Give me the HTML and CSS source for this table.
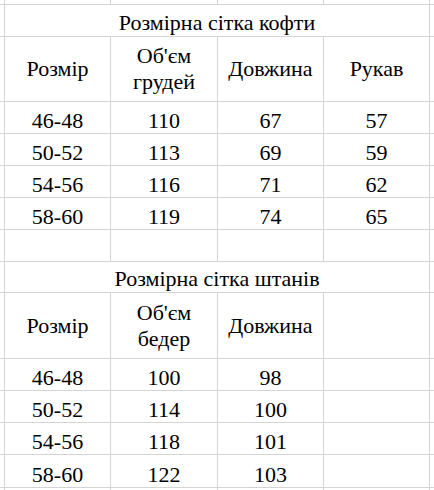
FILE: index.html
```html
<!DOCTYPE html>
<html>
<head>
<meta charset="utf-8">
<title>Розмірна сітка</title>
<link rel="stylesheet" href="styles.css">
</head>
<body>
<div class="sheet">
  <div class="c"></div><div class="c"></div><div class="c"></div><div class="c"></div><div class="c"></div><div class="c"></div>

  <div class="c"></div><div class="c title span4">Розмірна сітка кофти</div><div class="c"></div>

  <div class="c"></div><div class="c hd">Розмір</div><div class="c hd">Об'єм<br>грудей</div><div class="c hd">Довжина</div><div class="c hd">Рукав</div><div class="c"></div>

  <div class="c"></div><div class="c">46-48</div><div class="c">110</div><div class="c">67</div><div class="c">57</div><div class="c"></div>
  <div class="c"></div><div class="c">50-52</div><div class="c">113</div><div class="c">69</div><div class="c">59</div><div class="c"></div>
  <div class="c"></div><div class="c">54-56</div><div class="c">116</div><div class="c">71</div><div class="c">62</div><div class="c"></div>
  <div class="c"></div><div class="c">58-60</div><div class="c">119</div><div class="c">74</div><div class="c">65</div><div class="c"></div>

  <div class="c"></div><div class="c"></div><div class="c"></div><div class="c"></div><div class="c"></div><div class="c"></div>

  <div class="c"></div><div class="c title span4">Розмірна сітка штанів</div><div class="c"></div>

  <div class="c"></div><div class="c hd">Розмір</div><div class="c hd">Об'єм<br>бедер</div><div class="c hd">Довжина</div><div class="c"></div><div class="c"></div>

  <div class="c"></div><div class="c">46-48</div><div class="c">100</div><div class="c">98</div><div class="c"></div><div class="c"></div>
  <div class="c"></div><div class="c">50-52</div><div class="c">114</div><div class="c">100</div><div class="c"></div><div class="c"></div>
  <div class="c"></div><div class="c">54-56</div><div class="c">118</div><div class="c">101</div><div class="c"></div><div class="c"></div>
  <div class="c"></div><div class="c">58-60</div><div class="c">122</div><div class="c">103</div><div class="c"></div><div class="c"></div>

  <div class="c"></div><div class="c"></div><div class="c"></div><div class="c"></div><div class="c"></div><div class="c"></div>
</div>
</body>
</html>
```
FILE: styles.css
```css
html, body {
  margin: 0;
  padding: 0;
  background: #ffffff;
  font-family: Tinos, "Liberation Serif", serif;
  font-size: 22px;
  font-weight: 400;
}

.sheet {
  display: grid;
  grid-template-columns: 4px 105px 106px 105px 105px 4px;
  grid-template-rows: 4px 31px 64px 31px 31px 31px 31px 31px 30px 65px 31px 31px 31px 32px 2px;
  gap: 1px;
  width: 434px;
  height: 490px;
  overflow: hidden;
  background: #d4d4d4;
  color: #000000;
}

.c {
  background: #ffffff;
  display: flex;
  justify-content: center;
  align-items: flex-end;
  text-align: center;
  line-height: 22px;
  padding-bottom: 1px;
  white-space: nowrap;
}

.span4 {
  grid-column: span 4;
}

.title {
  padding-bottom: 2px;
}

.hd {
  align-items: center;
  line-height: 26px;
  padding-bottom: 0;
}
```
